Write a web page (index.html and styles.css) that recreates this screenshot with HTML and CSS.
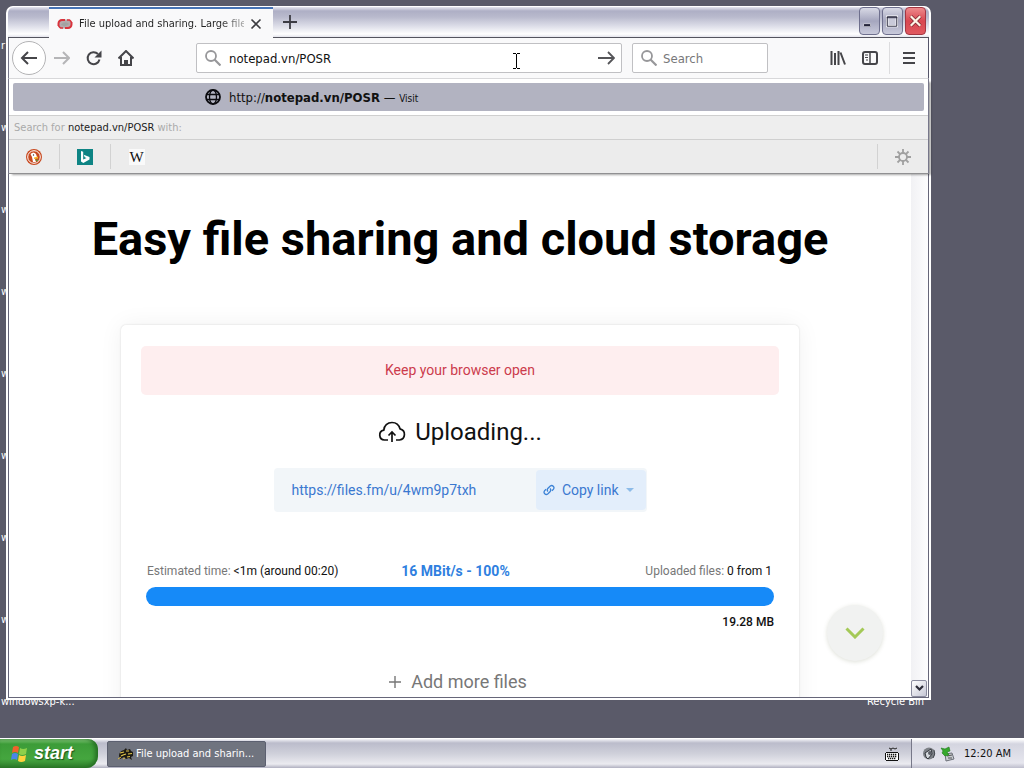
FILE: index.html
```html
<!DOCTYPE html>
<html lang="en">
<head>
<meta charset="utf-8">
<title>File upload and sharing</title>
<link rel="stylesheet" href="styles.css">
</head>
<body>
<div class="desktop">
  <ul class="shortcuts">
    <li>r</li><li>w</li><li>w</li><li>w</li><li>w</li><li>w</li><li>w</li><li>w</li><li>windowsxp-k...</li>
  </ul>
  <div class="recycle">Recycle Bin</div>

  <section class="window">
    <header class="titlebar">
      <div class="tab">
        <svg class="favicon" viewBox="0 0 16 12"><rect x="1" y="1.500" width="14" height="9" rx="4.500" fill="#b5a9ac"/><path d="M1.500 8V5.500a3.500 3.500 0 0 1 3.500-3.500h3M14.500 4v2.500a3.500 3.500 0 0 1-3.500 3.500H8" fill="none" stroke="#d9333c" stroke-width="2"/><path d="M10 2h2.500l2 2M6 10H3.500l-2-2" fill="none" stroke="#d9333c" stroke-width="1.500"/><path d="M4 6.500q4-4 8-.5q-4 4-8 .5" fill="#a2a2a2"/></svg>
        <span class="tab-title">File upload and sharing. Large file</span>
        <button class="icon-btn" aria-label="Close tab"><svg width="12" height="12" viewBox="0 0 12 12"><path d="M1.500 1.500l9 9M10.500 1.500l-9 9" stroke="#3c3c40" stroke-width="1.600" fill="none"/></svg></button>
      </div>
      <button class="icon-btn new-tab" aria-label="New tab"><svg width="16" height="16" viewBox="0 0 16 16"><path d="M8 1v14M1 8h14" stroke="#3c3c44" stroke-width="1.800"/></svg></button>
      <div class="window-buttons">
        <button class="wb" aria-label="Minimize"><svg viewBox="0 0 20 26"><rect x="4" y="16" width="7" height="3" fill="#23233a" stroke="#fff" stroke-width=".5"/></svg></button>
        <button class="wb" aria-label="Maximize"><svg viewBox="0 0 20 26"><path d="M4.500 8.500h10v10h-10z" fill="#c9cad9" stroke="#fff" stroke-width="2.400"/><path d="M4.500 8.500h10v10h-10zM4 9.500h11" fill="none" stroke="#23233a"/></svg></button>
        <button class="wb wb-close" aria-label="Close"><svg viewBox="0 0 20 26"><path d="M5 8l10 10M15 8L5 18" stroke="#7a2630" stroke-width="4"/><path d="M5 8l10 10M15 8L5 18" stroke="#fff5e6" stroke-width="2.400"/></svg></button>
      </div>
    </header>

    <nav class="toolbar">
      <button class="icon-btn back" aria-label="Back"><svg width="18" height="16" viewBox="0 0 18 16"><path d="M17 8H2M8 2L2 8l6 6" fill="none" stroke="#454549" stroke-width="2"/></svg></button>
      <button class="icon-btn nav-btn" aria-label="Forward"><svg width="16" height="16" viewBox="0 0 16 16"><path d="M0 8h14M9 2l6 6-6 6" fill="none" stroke="#b5b5b7" stroke-width="2"/></svg></button>
      <button class="icon-btn nav-btn" aria-label="Reload"><svg width="16" height="16" viewBox="0 0 16 16"><path d="M13.500 9.500A6 6 0 1 1 12 4" fill="none" stroke="#454549" stroke-width="2"/><path d="M15.500 0.500v7h-7z" fill="#454549"/></svg></button>
      <button class="icon-btn nav-btn" aria-label="Home"><svg width="16" height="16" viewBox="0 0 16 16"><path d="M0.500 8.500L8 1l7.500 7.500M3 7v8h10V7" fill="none" stroke="#454549" stroke-width="2"/><path d="M6 15v-5h4v5z" fill="#454549"/></svg></button>
      <div class="field url">
        <svg width="16" height="16" viewBox="0 0 16 16"><circle cx="6" cy="6" r="5" fill="none" stroke="#97979a" stroke-width="1.800"/><path d="M9.500 9.500l6 6" stroke="#97979a" stroke-width="2.200"/></svg>
        <input type="text" aria-label="Address" value="notepad.vn/POSR">
        <button class="icon-btn" aria-label="Go"><svg width="17" height="16" viewBox="0 0 17 16"><path d="M0 8h15M10 2l6 6-6 6" fill="none" stroke="#555558" stroke-width="1.800"/></svg></button>
      </div>
      <div class="field search">
        <svg width="16" height="16" viewBox="0 0 16 16"><circle cx="6" cy="6" r="5" fill="none" stroke="#97979a" stroke-width="1.800"/><path d="M9.500 9.500l6 6" stroke="#97979a" stroke-width="2.200"/></svg>
        <input type="text" aria-label="Search" placeholder="Search">
      </div>
      <div class="tools">
        <button class="icon-btn" aria-label="Library"><svg width="16" height="16" viewBox="0 0 16 16"><path d="M1.500 1v14M5 3v12M8.500 1v14M10.500 2.500l4.500 12" stroke="#454549" stroke-width="2" fill="none"/></svg></button>
        <button class="icon-btn" aria-label="Sidebars"><svg width="16" height="14" viewBox="0 0 16 14"><rect x="1" y="1" width="14" height="12" rx="2" fill="none" stroke="#454549" stroke-width="2"/><path d="M8 1v12" stroke="#454549" stroke-width="1.500"/><path d="M3 4h3M3 6.500h3M4 9h2" stroke="#454549"/></svg></button>
        <button class="icon-btn menu" aria-label="Menu"><svg width="14" height="12" viewBox="0 0 14 12"><path d="M1 1h12M1 6h12M1 11h12" stroke="#454549" stroke-width="2"/></svg></button>
      </div>
    </nav>

    <div class="suggest">
      <a class="suggest-row" href="#">
        <svg width="16" height="16" viewBox="0 0 16 16"><g fill="none" stroke="#0c0c10" stroke-width="1.800"><circle cx="8" cy="8" r="7"/><ellipse cx="8" cy="8" rx="3.500" ry="7" stroke-width="1.300"/><path d="M1.500 5.500h13M1.500 10.500h13" stroke-width="1.300"/></g></svg>
        <span>http://<b>notepad.vn/POSR</b> — <small>Visit</small></span>
      </a>
      <p class="suggest-note">Search for <span>notepad.vn/POSR</span> with:</p>
      <div class="engines">
        <button class="engine" aria-label="DuckDuckGo"><svg width="16" height="16" viewBox="0 0 16 16"><circle cx="8" cy="8" r="8" fill="#c8491f"/><circle cx="8" cy="8" r="6.300" fill="none" stroke="#fff"/><path d="M4.500 5q3-3 5.500 0l1 3-2 2 1 3H7L6 8z" fill="#fff"/><path d="M8 8.500l4-1v2l-4 .5z" fill="#f7b529"/><path d="M9 11l3-.5v2z" fill="#5a9c3c"/><circle cx="7.500" cy="6" r=".7" fill="#333"/></svg></button>
        <button class="engine" aria-label="Bing"><svg width="16" height="16" viewBox="0 0 16 16"><path d="M0 0h16v16H0z" fill="#0e8484"/><path d="M4 2l2.200.8v7.700L9.500 9l-1.800-.8-1-2.500L12.500 8v2.500L6.300 14 4 12.600z" fill="#fff"/></svg></button>
        <button class="engine wiki" aria-label="Wikipedia"><span>W</span></button>
        <button class="engine settings" aria-label="Search settings"><svg width="16" height="16" viewBox="0 0 16 16"><circle cx="8" cy="8" r="4" fill="none" stroke="#a0a0a0" stroke-width="1.800"/><path d="M8 0v4M8 12v4M0 8h4M12 8h4M2.500 2.500l2.600 2.600M10.900 10.900l2.600 2.600M13.500 2.500l-2.600 2.600M5.100 10.900l-2.600 2.600" stroke="#a0a0a0" stroke-width="1.800"/></svg></button>
      </div>
    </div>

    <div class="viewport">
      <main class="page">
        <h1>Easy file sharing and cloud storage</h1>
        <section class="card">
          <p class="alert">Keep your browser open</p>
          <h2><svg width="28" height="22" viewBox="0 0 28 22"><path d="M10 19H6.500a5 5 0 0 1-.7-9.900C6 4.500 9.500 1.500 14 1.500c4 0 7 2.500 8 6.300a5.700 5.700 0 0 1-.5 11.200H18M14 21v-9.500M10.500 14.500L14 11l3.500 3.500" fill="none" stroke="#111" stroke-width="1.700"/></svg>Uploading...</h2>
          <div class="share">
            <a href="#">https://files.fm/u/4wm9p7txh</a>
            <button class="copy"><svg width="12" height="12" viewBox="0 0 12 12"><g fill="none" stroke="#3b82d6" stroke-width="1.300"><path d="M5 7.500a2.300 2.300 0 0 1 0-3.200L7.300 2a2.300 2.300 0 0 1 3.200 3.200L9 6.700"/><path d="M7 4.500a2.300 2.300 0 0 1 0 3.200L4.700 10a2.300 2.300 0 0 1-3.200-3.200L3 5.300"/></g></svg>Copy link<svg width="8" height="4" viewBox="0 0 8 4"><path d="M0 0h8L4 4z" fill="#8dbbe8"/></svg></button>
          </div>
          <div class="stats">
            <span>Estimated time: <em>&lt;1m (around 00:20)</em></span>
            <strong id="rate">16 MBit/s - 100%</strong>
            <span class="right">Uploaded files: <em>0 from 1</em></span>
          </div>
          <progress class="bar" max="100" value="100" aria-labelledby="rate"></progress>
          <p class="size">19.28 MB</p>
          <button class="add"><svg width="12" height="12" viewBox="0 0 12 12"><path d="M6 0v12M0 6h12" stroke="#777" stroke-width="1.400"/></svg>Add more files</button>
        </section>
        <button class="fab" aria-label="Scroll down"><svg width="20" height="12" viewBox="0 0 20 12"><path d="M1.500 1.500L10 10l8.500-8.500" fill="none" stroke="#a4c957" stroke-width="3"/></svg></button>
      </main>
      <div class="scrollbar"><button aria-label="Scroll down one line"><svg width="9" height="7" viewBox="0 0 9 7"><path d="M1 1l3.500 3.500L8 1" fill="none" stroke="#2c2c38" stroke-width="2.200"/></svg></button></div>
    </div>
  </section>
  <svg class="ibeam" width="7" height="16" viewBox="0 0 7 16"><path d="M0 .5h3M4 .5h3M3.500 1v14M0 15.500h3M4 15.500h3" stroke="#000"/></svg>
</div>

<footer class="taskbar">
  <button class="start"><svg width="20" height="20" viewBox="0 0 20 20"><path d="M4 3q3-2 6 0L9 9q-3-2-6 0z" fill="#f2622c"/><path d="M11 4q3 2 7 0l-1 6q-4 2-7 0z" fill="#8ed04a"/><path d="M3 10q3-2 6 0l-1 6q-3-2-6 0z" fill="#4a86e8"/><path d="M10 11q3 2 7 0l-1 6q-4 2-7 0z" fill="#ffd23c"/></svg>start</button>
  <button class="task"><svg width="16" height="14" viewBox="0 0 16 14"><path d="M1 9Q1 4 6 3l2-2 1 2 3-1 1 2 2 1v4l-2 1 1 3-3-2-3 1-2-2-4 2z" fill="#1c1a12"/><path d="M2 6l4-1M8 4h3M10 7l4-.5M5 8l3-1M3 9l2-1M9 10l3-.5" stroke="#e3c64c" stroke-width="1.200"/><path d="M0 12l3-2M5 12l2-1" stroke="#d8b840"/></svg><span>File upload and sharin...</span></button>
  <svg class="keyboard" width="14" height="14" viewBox="0 0 14 14"><path d="M4 1l2 1 2-1 2 1 2-1M6 2v2" fill="none" stroke="#222"/><path d="M1 5h12v8H1z" fill="#fff"/><path d="M1 5.500h12M.5 6v7M13.500 6v7M1 13.500h12" fill="none" stroke="#111"/><path d="M2 7.500h10M2 9.500h10M3 11.500h8" stroke="#111" stroke-width="1.300" stroke-dasharray="1.300 .7"/></svg>
  <div class="tray">
    <svg width="14" height="14" viewBox="0 0 14 14"><circle cx="7" cy="6.500" r="6" fill="#7c8086"/><path d="M3 6l6-4 1 5-4 5-2-2z" fill="#d5d9de" stroke="#33363c"/><circle cx="8" cy="6" r="2" fill="#5b5f66"/><path d="M12 3q2 4-1 8" fill="none" stroke="#44484e"/></svg>
    <svg width="16" height="16" viewBox="0 0 16 16"><path d="M5 8l7-1 2 6-8 2z" fill="#c9cdd2" stroke="#6c7078"/><path d="M7 10l5-1M8 12h4" stroke="#555"/><path d="M1 2l4 1 4-2 1 4-3 1 2 3-4 1-3-3 1-2z" fill="#36a82c" stroke="#1d7a1a" stroke-width=".6"/></svg>
    <time>12:20 AM</time>
  </div>
</footer>
</body>
</html>
```

FILE: styles.css
```css
* { box-sizing: border-box; }
html, body { height: 100%; }
body {
  margin: 0;
  display: flex;
  flex-direction: column;
  overflow: hidden;
  background: #5a5a69;
  font-family: "DejaVu Sans Condensed", "Noto Sans", sans-serif;
  font-size: 12px;
  color: #111;
}
h1, h2, p, ul { margin: 0; padding: 0; }
button { font: inherit; color: inherit; border: 0; padding: 0; background: none; }
input { font: inherit; color: #111; border: 0; padding: 0; background: none; min-width: 0; flex: 1; outline: 0; }
a { color: inherit; text-decoration: none; }
svg { display: block; flex: none; }
.icon-btn { display: flex; align-items: center; justify-content: center; }

/* Desktop */
.desktop { position: relative; flex: 1; min-height: 0; }
.shortcuts { list-style: none; padding: 5px 1px; font-size: 11px; color: #fff; }
.shortcuts li { height: 82px; line-height: 82px; white-space: nowrap; }
.recycle { position: absolute; right: 100px; bottom: 29px; font-size: 11px; line-height: 14px; color: #fff; }
.ibeam { position: absolute; left: 513px; top: 53px; }

/* Window frame */
.window {
  position: absolute;
  top: 6px; left: 6px; right: 93px; bottom: 38px;
  display: flex;
  flex-direction: column;
  border: 1px solid #fff;
  border-width: 1px 2px 2px;
  border-radius: 7px 7px 0 0;
  background: #fff;
}
.titlebar {
  display: flex;
  height: 31px;
  padding-left: 41px;
  border-bottom: 1px solid #55555f;
  border-radius: 6px 6px 0 0;
  background: linear-gradient(#e6e6ef 0, #aeafc5 4px, #b9bacd 10px, #dcdde8 19px, #fff 27px, #e4e4ec 30px);
}
.tab {
  display: flex;
  align-items: center;
  gap: 6px;
  width: 224px;
  height: 31px;
  padding: 0 11px 0 8px;
  border-top: 2px solid #4572b5;
  background: #f9f9fa;
}
.favicon { width: 16px; height: 12px; }
.tab-title {
  flex: 1;
  overflow: hidden;
  font-size: 11px;
  white-space: nowrap;
  color: transparent;
  background: linear-gradient(90deg, #222 85%, #aaa);
  background-clip: text;
}
.new-tab { width: 34px; height: 29px; }
.window-buttons { display: flex; gap: 2px; margin-left: auto; padding-right: 3px; }
.wb {
  width: 21px;
  height: 28px;
  border: 1px solid #6e6f8d;
  border-radius: 4px;
  background: linear-gradient(#d8d9e5, #a5a6be 50%, #c9cadb);
}
.wb svg { width: 100%; height: 100%; }
.wb-close { border-color: #a33642; background: linear-gradient(#ee8a8c, #d94650 50%, #e05a60); }

/* Toolbar */
.toolbar {
  display: flex;
  align-items: center;
  height: 41px;
  padding: 0 1px 0 3px;
  border-bottom: 1px solid #d8d8da;
  border-left: 1px solid #77778a;
  border-right: 1px solid #55556a;
  background: #f9f9fa;
}
.back { width: 34px; height: 34px; border: 1px solid #b3b3b5; border-radius: 50%; background: #fff; }
.nav-btn { width: 32px; height: 32px; }
.field {
  display: flex;
  align-items: center;
  gap: 8px;
  height: 30px;
  padding: 0 6px 0 8px;
  border: 1px solid #c0c0c3;
  border-radius: 2px;
  background: #fff;
  font-size: 13px;
}
.url { flex: 1; margin-left: 54px; }
.search { width: 136px; margin-left: 10px; gap: 6px; }
.search input::placeholder { color: #77777a; opacity: 1; }
.tools { display: flex; align-items: center; gap: 16px; margin-left: 62px; }
.menu { width: 38px; height: 32px; border-left: 1px solid #dcdcde; margin-left: -5px; }

/* Address suggestions */
.suggest {
  position: relative;
  z-index: 1;
  border: 1px solid #77778a;
  border-width: 0 1px;
  border-bottom: 1px solid #909092;
  background: #fff;
  box-shadow: 3px 2px 2px -1px rgba(0, 0, 0, .35);
}
.suggest-row {
  display: flex;
  align-items: center;
  gap: 8px;
  height: 28px;
  margin: 4px;
  padding-left: 192px;
  border-radius: 2px;
  background: #b2b3c1;
  font-size: 13px;
}
.suggest-row small { font-size: 10px; }
.suggest-note {
  padding: 0 5px;
  border-top: 1px solid #cfcfcf;
  border-bottom: 1px solid #cfcfcf;
  background: #eee;
  font-size: 11px;
  line-height: 23px;
  color: #aaa;
}
.suggest-note span { color: #1c1c1c; }
.engines { display: flex; align-items: center; height: 33px; background: #ececec; }
.engine { display: flex; align-items: center; justify-content: center; width: 51px; height: 25px; border-right: 1px solid #d2d2d2; }
.wiki { border: 0; font-family: "Liberation Serif", serif; font-size: 15px; }
.wiki span { width: 16px; line-height: 16px; background: #fafafa; }
.settings { margin-left: auto; border-right: 0; border-left: 1px solid #d2d2d2; }

/* Web page */
.viewport {
  display: flex;
  flex: 1;
  min-height: 0;
  border: 1px solid #666679;
  border-top: 0;
}
.page {
  position: relative;
  flex: 1;
  min-width: 0;
  overflow: hidden;
  padding: 35px 20px 0;
  font-family: Roboto, sans-serif;
}
h1 { font-size: 47px; line-height: 60px; font-weight: 700; text-align: center; white-space: nowrap; color: #000; }
.card {
  max-width: 678px;
  height: 480px;
  margin: 56px auto 0;
  padding: 21px 20px;
  border-radius: 5px;
  box-shadow: 0 0 2px rgba(0, 0, 0, .16), 0 0 24px rgba(0, 0, 0, .06);
}
.alert { border-radius: 5px; background: #feeeef; font-size: 14px; line-height: 49px; text-align: center; color: #cc3b4c; }
h2 {
  display: flex;
  align-items: center;
  justify-content: center;
  gap: 9px;
  margin-top: 21px;
  font-size: 24px;
  line-height: 32px;
  font-weight: 400;
}
.share {
  display: flex;
  align-items: center;
  justify-content: space-between;
  width: 373px;
  height: 44px;
  margin: 20px auto 0;
  padding-left: 18px;
  border-radius: 4px;
  background: #f2f6f9;
  font-size: 14px;
  color: #3a78d0;
}
.copy { display: flex; align-items: center; gap: 7px; height: 40px; padding: 0 12px 0 7px; margin-right: 1px; border-radius: 4px; background: #e3eefb; }
.stats {
  display: grid;
  grid-template-columns: 1fr auto 1fr;
  align-items: center;
  margin-top: 49px;
  padding: 0 7px 0 6px;
  line-height: 20px;
  color: #777;
}
.stats em { font-style: normal; color: #111; }
.stats strong { padding-right: 8px; font-size: 14px; font-weight: 700; color: #2f7fe0; }
.right { text-align: right; }
.bar {
  display: block;
  width: calc(100% - 10px);
  height: 19px;
  margin: 6px 5px 0;
  border: 0;
  border-radius: 10px;
  overflow: hidden;
  appearance: none;
}
.bar::-webkit-progress-bar { background: #e6eef7; }
.bar::-webkit-progress-value { background: #168af8; }
.size { padding-right: 5px; font-weight: 500; line-height: 32px; text-align: right; }
.add { display: flex; align-items: center; gap: 10px; margin: 32px auto 0; padding-right: 4px; font-size: 18px; line-height: 24px; color: #777; }
.fab {
  position: absolute;
  right: 28px;
  bottom: 36px;
  display: flex;
  align-items: center;
  justify-content: center;
  width: 56px;
  height: 56px;
  border-radius: 50%;
  background: #f1f2f1;
  box-shadow: 0 1px 4px rgba(90, 100, 60, .2);
}
.scrollbar { display: flex; align-items: flex-end; width: 17px; background: linear-gradient(90deg, #f1f1f4, #fdfdfe); }
.scrollbar button {
  display: flex;
  align-items: center;
  justify-content: center;
  width: 16px;
  height: 17px;
  border: 1px solid #8b8c9f;
  border-radius: 2px;
  background: linear-gradient(135deg, #fff, #c6c7d5);
}

/* Taskbar */
.taskbar {
  display: flex;
  align-items: center;
  height: 30px;
  border-top: 1px solid #fff;
  background: linear-gradient(#f4f4f8, #bbbccb 4px, #d0d1db 15px, #ebebf0 25px, #b0b0c0);
}
.start {
  display: flex;
  align-items: center;
  gap: 5px;
  width: 98px;
  height: 29px;
  padding-left: 9px;
  border-radius: 0 10px 12px 0;
  background: linear-gradient(#8ccf83, #3c9c38 5px, #45a63f 20px, #2c7a29);
  box-shadow: inset -3px 0 4px #256e22;
  font: italic 700 18px "Liberation Sans", sans-serif;
  color: #fff;
  text-shadow: 1px 1px 1px #1d541b;
}
.task {
  display: flex;
  align-items: center;
  gap: 2px;
  width: 159px;
  height: 26px;
  margin-left: 9px;
  padding-left: 10px;
  border: 1px solid #5c6070;
  border-radius: 2px;
  background: #70747f;
  font-size: 11px;
  color: #fff;
  white-space: nowrap;
}
.keyboard { margin-left: auto; }
.tray {
  display: flex;
  align-items: center;
  gap: 4px;
  height: 29px;
  margin-left: 12px;
  padding: 0 13px 0 10px;
  border-left: 1px solid #777889;
  background: linear-gradient(#fff, #d4d5e0 5px, #e6e6ee 24px, #bdbdcc);
  font-size: 11px;
}
.tray time { margin-left: 4px; }
```
